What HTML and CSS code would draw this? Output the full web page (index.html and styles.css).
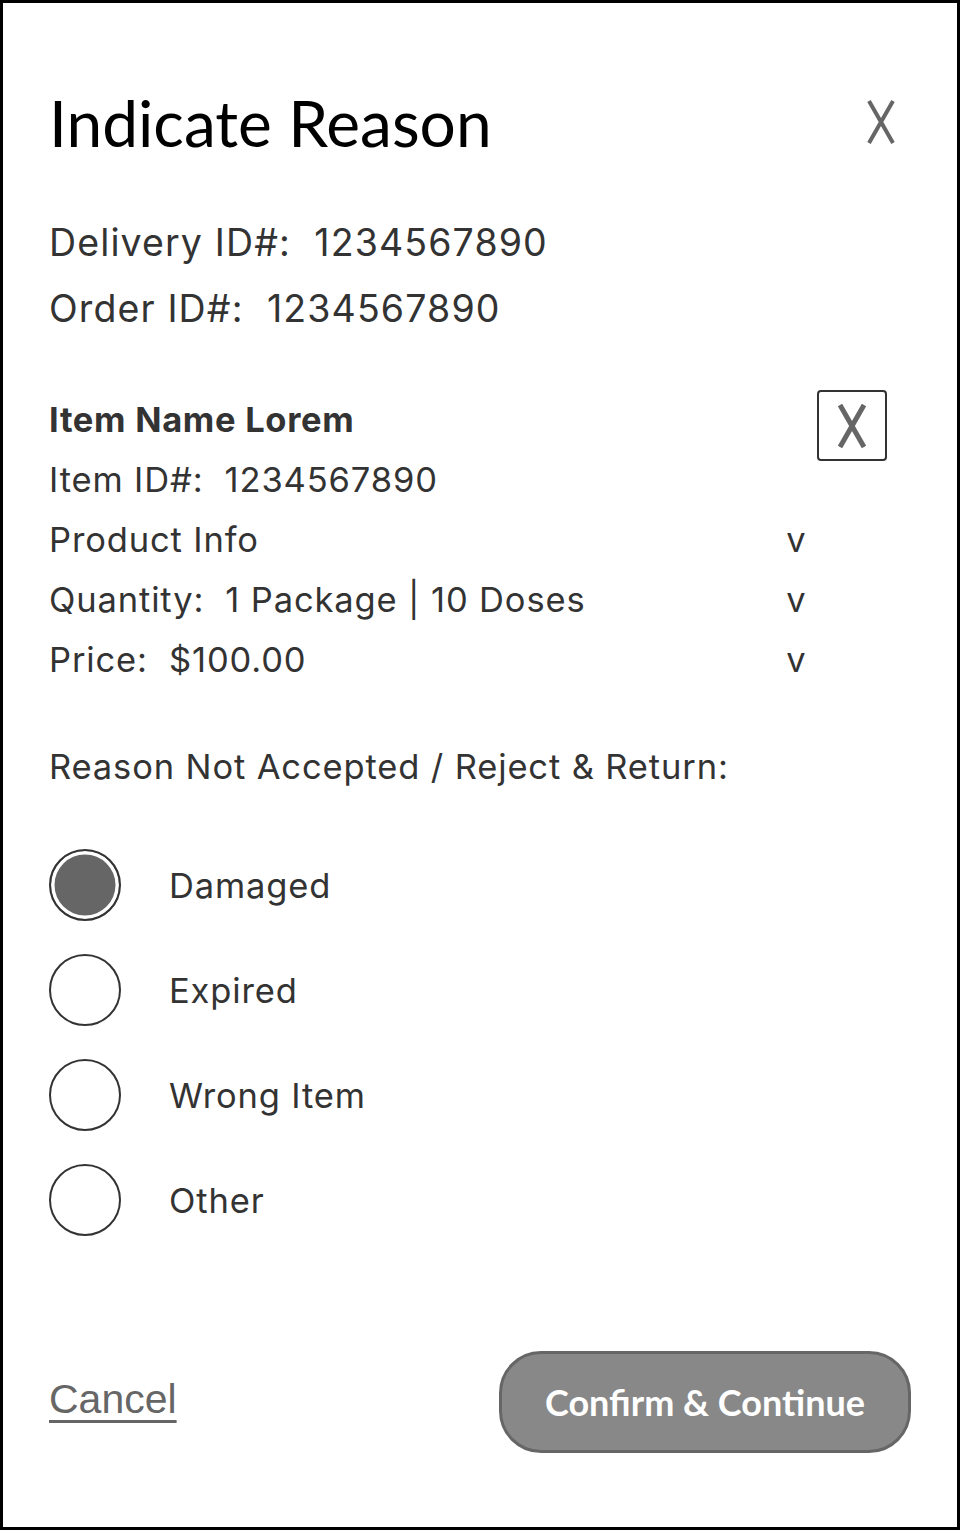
FILE: index.html
```html
<!DOCTYPE html>
<html lang="en">
<head>
<meta charset="utf-8">
<title>Indicate Reason</title>
<link rel="stylesheet" href="styles.css">
</head>
<body>
<div class="frame">
  <header class="head">
    <h1 class="title">Indicate Reason</h1>
    <button class="close" aria-label="Close">
      <svg width="30" height="44" viewBox="0 0 30 44"><path d="M3 1 L27 43 M27 1 L3 43" stroke="#666" stroke-width="4" fill="none"/></svg>
    </button>
  </header>

  <section class="ids">
    <p class="line">Delivery ID#:&nbsp; 1234567890</p>
    <p class="line">Order ID#:&nbsp; 1234567890</p>
  </section>

  <section class="item">
    <div class="details">
      <p class="row name">Item Name Lorem</p>
      <p class="row">Item ID#:&nbsp; 1234567890</p>
      <p class="row"><span>Product Info</span><span class="chev">v</span></p>
      <p class="row"><span>Quantity:&nbsp; 1 Package | 10 Doses</span><span class="chev">v</span></p>
      <p class="row"><span>Price:&nbsp; $100.00</span><span class="chev">v</span></p>
    </div>
    <button class="remove" aria-label="Remove item">
      <svg width="30" height="44" viewBox="0 0 30 44"><path d="M3 1 L27 43 M27 1 L3 43" stroke="#666" stroke-width="5" fill="none"/></svg>
    </button>
  </section>

  <p class="reason">Reason Not Accepted / Reject &amp; Return:</p>

  <ul class="options">
    <li class="option"><span class="radio checked"></span><span class="label">Damaged</span></li>
    <li class="option"><span class="radio"></span><span class="label">Expired</span></li>
    <li class="option"><span class="radio"></span><span class="label">Wrong Item</span></li>
    <li class="option"><span class="radio"></span><span class="label">Other</span></li>
  </ul>

  <footer class="actions">
    <a class="cancel" href="#">Cancel</a>
    <button class="confirm">Confirm &amp; Continue</button>
  </footer>
</div>
</body>
</html>
```

FILE: styles.css
```css
* { box-sizing: border-box; }
html, body { margin: 0; padding: 0; background: #fff; }
body { font-family: "Inter", "Liberation Sans", sans-serif; color: #333; }

.frame {
  width: 960px;
  height: 1530px;
  border: 3px solid #000;
  padding: 80px 46px 0 46px;
}

.head {
  display: flex;
  justify-content: space-between;
  align-items: flex-start;
}
.title {
  margin: 0;
  font-family: "Lato", "Liberation Sans", sans-serif;
  font-weight: 400;
  font-size: 64px;
  line-height: 79px;
  color: #000;
}
.close {
  border: 0;
  background: none;
  padding: 0;
  margin: 17px 15px 0 0;
  width: 30px;
  height: 44px;
}
.close svg, .remove svg { display: block; }

.ids { margin-top: 48px; }
.line {
  margin: 0;
  font-size: 37.5px;
  line-height: 66px;
  letter-spacing: 0.03em;
}

.item {
  margin-top: 48px;
  display: flex;
  align-items: flex-start;
  gap: 11px;
}
.details { width: 757px; }
.row {
  margin: 0;
  font-size: 34.5px;
  line-height: 60px;
  letter-spacing: 0.025em;
  display: flex;
  justify-content: space-between;
}
.row.name { font-weight: 700; letter-spacing: 0.02em; }
.chev { width: 20px; text-align: center; letter-spacing: 0; }

.remove {
  width: 70px;
  height: 71px;
  border: 2px solid #333;
  border-radius: 4px;
  background: #fff;
  padding: 0;
  display: flex;
  align-items: center;
  justify-content: center;
}

.reason {
  margin: 47px 0 0 0;
  font-size: 34.5px;
  line-height: 60px;
  letter-spacing: 0.025em;
}

.options {
  list-style: none;
  margin: 52px 0 0 0;
  padding: 0;
  display: flex;
  flex-direction: column;
  gap: 33px;
}
.option {
  display: flex;
  align-items: center;
  height: 72px;
}
.radio {
  width: 72px;
  height: 72px;
  border: 2.5px solid #333;
  border-radius: 50%;
  flex: none;
  background: #fff;
}
.radio.checked {
  background: #666;
  box-shadow: inset 0 0 0 3.5px #fff;
}
.label {
  margin-left: 48px;
  font-size: 34.5px;
  letter-spacing: 0.025em;
}

.actions {
  margin-top: 115px;
  display: flex;
  justify-content: space-between;
  align-items: center;
}
.cancel {
  font-family: "Liberation Sans", "Arial", sans-serif;
  font-size: 41px;
  color: #666;
  text-decoration: underline;
  text-decoration-thickness: 3px;
  text-underline-offset: 7px;
  margin-top: -6px;
}
.confirm {
  width: 412px;
  height: 102px;
  border: 3px solid #666;
  border-radius: 42px;
  background: #888;
  color: #fff;
  font-family: "Lato", "Liberation Sans", sans-serif;
  font-weight: 700;
  font-size: 36px;
  padding: 0;
}
```
